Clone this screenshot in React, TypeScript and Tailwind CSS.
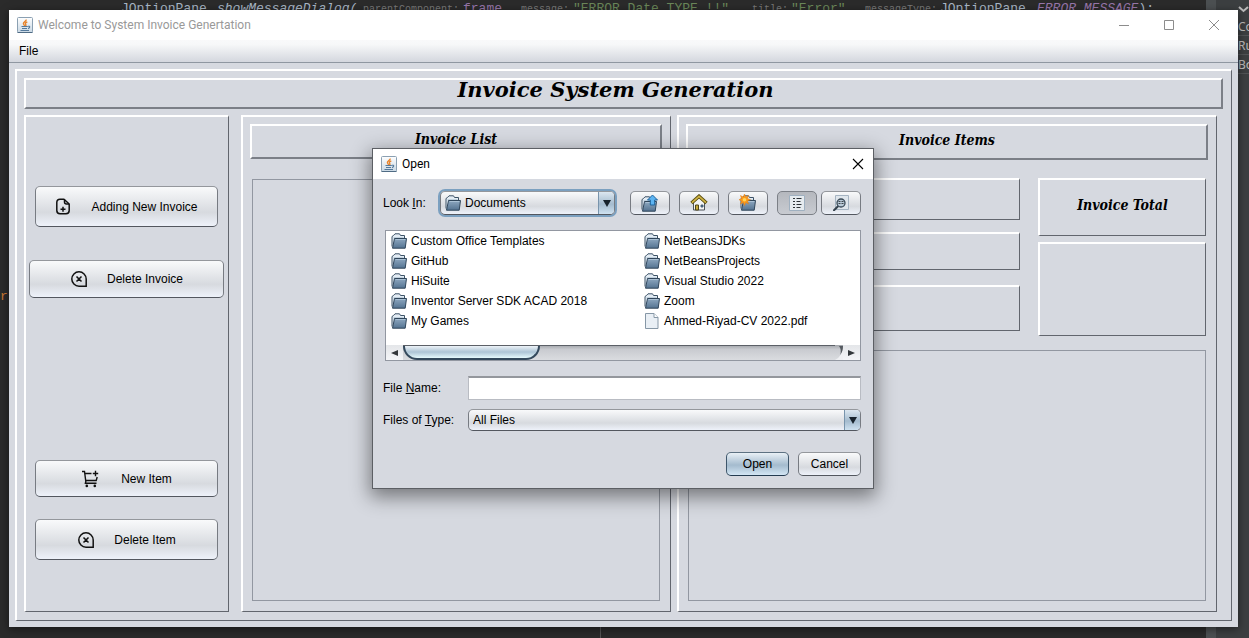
import { ReactNode } from "react";

const sans = "font-['Liberation_Sans',Arial,sans-serif]";
const bevel =
  "border-t-2 border-l-2 border-r border-b border-t-white border-l-white border-r-[#62666e] border-b-[#62666e]";
const raised =
  "border-2 border-t-white border-l-white border-r-[#7b7f87] border-b-[#7b7f87]";
const serifWide = "font-['DejaVu_Serif',serif] font-bold italic text-black";
const serif = "font-['DejaVu_Serif_Condensed','DejaVu_Serif',serif] font-bold italic text-black";
const caption = "font-['Roboto','Noto_Sans',sans-serif] text-xs";
const face =
  "border border-t-[#94979c] border-x-[#777b82] border-b-[#53575f] bg-linear-to-b from-[#f9fafb] via-[#d7dadf] via-65% to-[#eef2fa]";
const blueFace =
  "border border-t-[#5d7182] border-x-[#3e566b] border-b-[#243b50] bg-linear-to-b from-[#e9f0f6] via-[#a4bbce] via-55% to-[#d3e6f4]";

function JavaIcon() {
  return (
    <svg width="16" height="16" viewBox="0 0 16 16" className="shrink-0" aria-hidden="true">
      <defs>
        <linearGradient id="jbg" x1="0" y1="0" x2="0" y2="1">
          <stop offset="0" stopColor="#ffffff" />
          <stop offset="1" stopColor="#c9d8e4" />
        </linearGradient>
      </defs>
      <rect x=".5" y=".5" width="15" height="15" rx="1" fill="url(#jbg)" stroke="#8ba0b2" />
      <path d="M.5 15.5h15" stroke="#4f6b84" />
      <path d="M9 2.500c1 1.600-3 2.500-2.600 4.200.2.900 1.200 1.200 1 2.300M10.300 4.800c-1.800.8-2.300 1.500-1.600 2.500.5.800.3 1.300-.3 1.900" fill="none" stroke="#e8832a" strokeWidth="1.400" />
      <path d="M4.500 9.500h6.300M5 11.500h5M3.500 13.500h8.500M11 9.300c2.300-.5 2.300 1.700 0 2.300" fill="none" stroke="#54799b" strokeWidth="1.100" />
    </svg>
  );
}

function FolderShape() {
  return (
    <g>
      <path d="M1 13.500V3.500l1.500-1L4 .800h4.500l1 1.700h4v3" fill="#e4edf5" stroke="#3c5266" strokeLinejoin="round" />
      <path d="M2.500 5h10" stroke="#9fb4c6" />
      <path d="M3.500 5.500h12l-1.300 9.700H1.500z" fill="url(#fold)" stroke="#30465b" strokeLinejoin="round" />
      <path d="M4.500 6.500h9.800" stroke="#a9c0d4" />
    </g>
  );
}

function FolderDefs() {
  return (
    <svg width="0" height="0" className="absolute" aria-hidden="true">
      <defs>
        <linearGradient id="fold" x1="0" y1="0" x2="0" y2="1">
          <stop offset="0" stopColor="#8fa9c1" />
          <stop offset="1" stopColor="#547391" />
        </linearGradient>
      </defs>
    </svg>
  );
}

function FolderIcon() {
  return (
    <svg width="16" height="16" viewBox="0 0 16 16" className="shrink-0" aria-hidden="true">
      <FolderShape />
    </svg>
  );
}

function FileIcon() {
  return (
    <svg width="16" height="16" viewBox="0 0 16 16" className="shrink-0" aria-hidden="true">
      <path d="M1.500.500h8.500l4 4v11H1.500z" fill="#e9eff5" stroke="#8697a6" />
      <path d="M10 .500v4h4" fill="#fff" stroke="#8697a6" />
    </svg>
  );
}

function UpFolderIcon() {
  return (
    <svg width="18" height="18" viewBox="0 0 18 18" aria-hidden="true">
      <g transform="translate(0 2)">
        <FolderShape />
      </g>
      <path d="M11.500 1l5 5h-2.800v5H9.300V6H6.500z" fill="#5cb4f2" stroke="#1c639c" strokeLinejoin="round" />
    </svg>
  );
}

function HomeIcon() {
  return (
    <svg width="18" height="18" viewBox="0 0 18 18" aria-hidden="true">
      <path d="M3.500 8.500L9 3.500l5.500 5v7.500h-11z" fill="#f3f4f4" stroke="#4c5359" />
      <path d="M1.500 9L9 2.200 16.500 9" fill="none" stroke="#5b4d10" strokeWidth="3.400" />
      <path d="M2 8.600L9 2.300l7 6.300" fill="none" stroke="#d0b544" strokeWidth="1.600" />
      <path d="M5.500 11h3v5h-3z" fill="#c9ab3c" stroke="#4f4516" />
      <path d="M11 11h2v2h-2z" fill="#6b90b4" stroke="#34495d" strokeWidth=".8" />
    </svg>
  );
}

function NewFolderIcon() {
  return (
    <svg width="18" height="18" viewBox="0 0 18 18" aria-hidden="true">
      <g transform="translate(1 1)">
        <FolderShape />
      </g>
      <path d="M5.500 0l1.300 3L9.500 1.500 8.500 4.500l3 1.200-3 1.300 1 3-2.700-1.400-1.300 3-1.300-3L1.500 10l1-3-2.500-1.300 2.500-1.200-1-3L4.200 3z" fill="#fb9a1b" stroke="#e07b12" strokeWidth=".5" />
      <circle cx="5.500" cy="5.700" r="1.800" fill="#ffd55a" />
    </svg>
  );
}

function ListIcon() {
  return (
    <svg width="16" height="16" viewBox="0 0 16 16" aria-hidden="true">
      <path d="M.5.500h15v15H.5z" fill="#e6ebef" stroke="#9fb0c0" />
      <path d="M4 3.500h2M4 6.500h2M4 9.500h2M4 12.500h2M7.500 3.500h5M7.500 6.500h4M7.500 9.500h5M7.500 12.500h4" stroke="#2e3337" />
    </svg>
  );
}

function DetailsIcon() {
  return (
    <svg width="16" height="16" viewBox="0 0 16 16" aria-hidden="true">
      <path d="M2.500.500h13v14h-13z" fill="#dfe6ec" stroke="#a5b4c2" />
      <path d="M5.300 11L1 15.300" stroke="#35424d" strokeWidth="2" strokeLinecap="round" />
      <circle cx="8" cy="8" r="4" fill="#b9cad8" stroke="#3a4a57" strokeWidth="1.300" />
      <path d="M5.500 6.500h2M8.500 6.500h2M5.500 8.500h2M8.500 8.500h2" stroke="#3b4348" />
    </svg>
  );
}

function FileAddIcon() {
  return (
    <svg width="16" height="18" viewBox="0 0 16 18" fill="none" stroke="#111" strokeWidth="1.500" strokeLinejoin="round" aria-hidden="true">
      <path d="M9 1.300H5Q1.800 1.300 1.800 4.500v8q0 3.200 3.200 3.200h6q3.200 0 3.200-3.200V6z" />
      <path d="M9.500 1.500V4q0 2 2 2H14M8 8.800v5M5.500 11.300h5" />
    </svg>
  );
}

function DeleteIcon() {
  return (
    <svg width="18" height="18" viewBox="0 0 18 18" fill="none" stroke="#111" strokeWidth="1.500" aria-hidden="true">
      <path d="M9 1.800a7.200 7.200 0 0 1 7.200 7.200v7.200H9A7.200 7.200 0 0 1 9 1.800zM6.500 6.500l5 5M11.500 6.500l-5 5" />
    </svg>
  );
}

function CartAddIcon() {
  return (
    <svg width="18" height="18" viewBox="0 0 18 18" fill="none" stroke="#111" strokeWidth="1.400" aria-hidden="true">
      <path d="M1 1.500h2.500l1.200 9h10.500l1-3.500M4.200 3.500h6.300M14.500.800v5.400M11.800 3.500h5.400M5 10.500l-.6 2.800H15.500" />
      <circle cx="5.800" cy="15.900" r="1.300" fill="#111" stroke="none" />
      <circle cx="13.800" cy="15.900" r="1.300" fill="#111" stroke="none" />
    </svg>
  );
}

function ActionButton({ icon, label, size }: { icon: ReactNode; label: string; size: string }) {
  return (
    <button type="button" className={`flex items-center justify-center rounded-[5px] text-xs text-black ${face} ${size}`}>
      {icon}
      {label}
    </button>
  );
}

function ToolButton({ label, children }: { label: string; children: ReactNode }) {
  return (
    <button type="button" aria-label={label} className={`flex h-6 w-10 items-center justify-center rounded-[5px] ${face}`}>
      {children}
    </button>
  );
}

function Entry({ name, file }: { name: string; file?: boolean }) {
  return (
    <li className="flex h-5 items-center gap-1 whitespace-nowrap">
      {file ? <FileIcon /> : <FolderIcon />}
      {name}
    </li>
  );
}

function Editor() {
  const hint = "text-[10px] text-[#787878]";
  return (
    <div className="absolute inset-0 flex bg-[#2b2b2b] font-['Liberation_Mono','Courier_New',monospace] text-[13px] text-[#a9b7c6]">
      <div className="relative flex-1 overflow-hidden">
        <div className="flex h-[18px] items-center whitespace-pre pl-[121px]">
          <span className="w-24">JOptionPane.</span>
          <span className="w-[146px] italic">showMessageDialog(</span>
          <span className={`w-[100px] ${hint}`}>parentComponent:</span>
          <span className="w-[58px]"><span className="text-[#9876aa]">frame</span>,</span>
          <span className={`w-[52px] ${hint}`}>message:</span>
          <span className="w-[179px]"><span className="text-[#6a8759]">"ERROR Date TYPE !!"</span>,</span>
          <span className={`w-[39px] ${hint}`}>title:</span>
          <span className="w-[74px]"><span className="text-[#6a8759]">"Error"</span>,</span>
          <span className={`w-[75px] ${hint}`}>messageType:</span>
          <span className="w-[97px]">JOptionPane.</span>
          <span><span className="italic text-[#9876aa]">ERROR_MESSAGE</span>);</span>
        </div>
        <div className="absolute top-[287px] left-0 text-[#cc7832]">r</div>
        <div className="absolute bottom-0 left-[600px] h-3 w-px bg-[#555555]" />
      </div>
      <div className="w-[10px] bg-[#4c5052]" />
      <div className="flex w-[33px] flex-col overflow-hidden bg-[#3c3f41] pl-[22px] font-['Noto_Sans',sans-serif] text-xs text-[#bbbbbb]">
        <div className="flex h-[17px] items-center">
          <svg width="11" height="10" viewBox="0 0 11 10" fill="none" stroke="#bbbbbb" strokeWidth="2" aria-hidden="true">
            <path d="M1 3l4.500 4L10 3" />
          </svg>
        </div>
        <div className="h-[19px] border-b border-[#515456] leading-5">Co</div>
        <div className="h-[19px] border-b border-[#515456] leading-5">Ru</div>
        <div className="h-[19px] border-b border-[#515456] leading-5">Bo</div>
      </div>
    </div>
  );
}

function OpenDialog() {
  return (
    <section role="dialog" aria-label="Open" className="w-[502px] border border-[#5c5f64] bg-[#d6d9e0] text-xs text-black shadow-[0_6px_18px_2px_rgba(0,0,0,0.45)]">
      <header className="flex h-[30px] items-center bg-white px-2">
        <JavaIcon />
        <h2 className={`ml-[5px] flex-1 ${caption}`}>Open</h2>
        <button type="button" aria-label="Close" className="p-px">
          <svg width="12" height="12" viewBox="0 0 12 12" stroke="#000" strokeWidth="1.100" aria-hidden="true">
            <path d="M1 1l10 10M11 1L1 11" />
          </svg>
        </button>
      </header>
      <div className="pt-3 pr-3 pb-3 pl-[10px]">
        <div className="flex h-6 items-center">
          <label htmlFor="look" className="w-[57px]">Look <u>I</u>n:</label>
          <div className={`flex h-6 w-[175px] items-center overflow-hidden rounded-[5px] pl-1 ring-2 ring-[#7ba0c0] ${face}`}>
            <FolderIcon />
            <select id="look" className="min-w-0 flex-1 appearance-none bg-transparent pl-1 outline-none">
              <option>Documents</option>
            </select>
            <Arrow />
          </div>
          <div className="ml-auto flex">
            <div className="flex gap-[9px]">
              <ToolButton label="Up one level"><UpFolderIcon /></ToolButton>
              <ToolButton label="Home"><HomeIcon /></ToolButton>
              <ToolButton label="Create new folder"><NewFolderIcon /></ToolButton>
              <button type="button" aria-label="List" aria-pressed="true" className="flex h-6 w-10 items-center justify-center rounded-[5px] border border-[#7c8087] bg-linear-to-b from-[#b5b8be] to-[#c8cbd1]">
                <ListIcon />
              </button>
            </div>
            <div className="ml-1">
              <ToolButton label="Details"><DetailsIcon /></ToolButton>
            </div>
          </div>
        </div>
        <div className="mt-[15px] ml-[2px] border border-[#9297a1] bg-white">
          <div className="flex h-[114px] pl-[5px]">
            <ul className="w-[253px]">
              <Entry name="Custom Office Templates" />
              <Entry name="GitHub" />
              <Entry name="HiSuite" />
              <Entry name="Inventor Server SDK ACAD 2018" />
              <Entry name="My Games" />
            </ul>
            <ul>
              <Entry name="NetBeansJDKs" />
              <Entry name="NetBeansProjects" />
              <Entry name="Visual Studio 2022" />
              <Entry name="Zoom" />
              <Entry name="Ahmed-Riyad-CV 2022.pdf" file />
            </ul>
          </div>
          <div className="flex h-[15px] bg-linear-to-b from-[#a2a5aa] via-[#c9cbd0] via-30% to-[#dadce0]">
            <button type="button" aria-label="Scroll left" className="flex w-[17px] items-center justify-center bg-linear-to-b from-[#e4e6e9] to-[#f4f5f8]">
              <svg width="7" height="6" viewBox="0 0 7 6" aria-hidden="true"><path d="M7 0v6L0 3z" fill="#33373b" /></svg>
            </button>
            <div className="flex flex-1 border-t border-[#5c6067]">
              <div className="w-[137px] rounded-b-[14px] border-x-2 border-b-2 border-[#34495c] bg-linear-to-b from-[#edf3f8] via-[#adc4d5] via-50% to-[#e6fafd]" />
            </div>
            <svg width="8" height="15" viewBox="0 0 8 15" aria-hidden="true">
              <path d="M8 1v14H0Q7 12 8 1z" fill="#eff0f3" />
              <path d="M4 1h4Q8 7 5 10 7 5 4 1z" fill="#555a60" />
            </svg>
            <button type="button" aria-label="Scroll right" className="flex w-[17px] items-center justify-center bg-linear-to-b from-[#e4e6e9] to-[#f4f5f8]">
              <svg width="7" height="6" viewBox="0 0 7 6" aria-hidden="true"><path d="M0 0v6l7-3z" fill="#33373b" /></svg>
            </button>
          </div>
        </div>
        <div className="mt-[15px] flex h-6 items-center">
          <label htmlFor="fname" className="w-[85px]">File <u>N</u>ame:</label>
          <input id="fname" type="text" className="h-6 min-w-0 flex-1 border border-t-2 border-[#b9bcc3] border-t-[#94979d] bg-white px-1 outline-none" />
        </div>
        <div className="mt-[9px] flex h-[22px] items-center">
          <label htmlFor="ftype" className="w-[85px]">Files of <u>T</u>ype:</label>
          <div className={`flex h-[22px] min-w-0 flex-1 items-center overflow-hidden rounded-[5px] ${face}`}>
            <select id="ftype" className="min-w-0 flex-1 appearance-none bg-transparent pl-1 outline-none">
              <option>All Files</option>
            </select>
            <Arrow />
          </div>
        </div>
        <div className="mt-[21px] flex justify-end gap-[9px]">
          <button type="button" className={`h-6 w-[63px] rounded-[5px] ${blueFace}`}>Open</button>
          <button type="button" className={`h-6 w-[63px] rounded-[5px] ${face}`}>Cancel</button>
        </div>
      </div>
    </section>
  );
}

function Arrow() {
  return (
    <span className="flex w-4 shrink-0 items-center justify-center self-stretch border-l border-[#7894ac] bg-linear-to-b from-[#dce7f0] via-[#a4bbce] via-55% to-[#cfe2f1]">
      <svg width="8" height="7" viewBox="0 0 8 7" aria-hidden="true"><path d="M0 0h8L4 7z" fill="#17222c" /></svg>
    </span>
  );
}

export default function App() {
  return (
    <div className={`relative h-screen overflow-hidden ${sans}`}>
      <FolderDefs />
      <Editor />
      <main className="absolute top-[10px] right-[11px] bottom-[11px] left-[9px] flex flex-col bg-[#d6d9e0] shadow-[0_2px_8px_rgba(0,0,0,0.5)]">
        <header className="flex h-[30px] items-center bg-white pl-2">
          <JavaIcon />
          <h1 className={`ml-[5px] flex-1 text-[#999999] ${caption}`}>Welcome to System Invoice Genertation</h1>
          <div className="flex pr-[2px]">
            <WindowButton label="Minimize" d="M0 5.500h10" />
            <WindowButton label="Maximize" d="M.5.500h9v9h-9z" />
            <WindowButton label="Close" d="M0 0l10 10M10 0L0 10" />
          </div>
        </header>
        <nav className="flex h-[23px] items-center border-b border-[#8f97a1] bg-linear-to-b from-[#f9f9fa] via-[#f7f8f9] via-20% to-[#d4d7de] pl-[10px]">
          <button type="button" className="text-xs text-black">File</button>
        </nav>
        <div className="flex min-h-0 flex-1 p-[6px]">
          <div className={`flex min-w-0 flex-1 flex-col gap-[6px] pt-[7px] pr-2 pb-2 pl-[7px] ${bevel}`}>
            <h2 className={`h-[31px] pr-4 text-center text-[21px] leading-5 ${raised} ${serifWide}`}>Invoice System Generation</h2>
            <div className="flex min-h-0 flex-1 pr-[6px]">
              <aside className={`flex w-[205px] shrink-0 flex-col pt-[69px] pb-[51px] ${bevel}`}>
                <ActionButton icon={<FileAddIcon />} label="Adding New Invoice" size="mr-[10px] ml-[9px] h-[41px] gap-5" />
                <ActionButton icon={<DeleteIcon />} label="Delete Invoice" size="mt-[33px] mr-1 ml-[3px] h-[38px] gap-[19px]" />
                <ActionButton icon={<CartAddIcon />} label="New Item" size="mt-auto mr-[10px] ml-[9px] h-[37px] gap-[22px]" />
                <ActionButton icon={<DeleteIcon />} label="Delete Item" size="mt-[22px] mr-[10px] ml-[9px] h-[41px] gap-[19px]" />
              </aside>
              <section className={`ml-3 flex min-w-0 flex-[412] flex-col pt-[7px] pr-2 pb-[10px] pl-[7px] ${bevel}`}>
                <h3 className={`h-[35px] text-center text-sm leading-[26px] ${raised} ${serif}`}>Invoice List</h3>
                <div className="mx-[2px] mt-5 flex-1 border border-[#9297a1]" />
              </section>
              <section className={`ml-[6px] flex min-w-0 flex-[522] flex-col pt-[7px] pr-2 pb-[10px] pl-[7px] ${bevel}`}>
                <h3 className={`h-9 text-center text-sm leading-7 ${raised} ${serif}`}>Invoice Items</h3>
                <div className="mx-[2px] mt-[18px] flex gap-[18px]">
                  <div className="flex min-w-0 flex-1 flex-col">
                    <div className={`h-[42px] ${bevel}`} />
                    <div className={`mt-3 h-[38px] ${bevel}`} />
                    <div className={`mt-[15px] h-[46px] ${bevel}`} />
                  </div>
                  <div className="flex w-[168px] shrink-0 flex-col gap-[6px]">
                    <h3 className={`h-[58px] text-center text-sm leading-[50px] ${bevel} ${serif}`}>Invoice Total</h3>
                    <div className={`h-[94px] ${bevel}`} />
                  </div>
                </div>
                <div className="mx-[2px] mt-[14px] flex-1 border border-[#9297a1]" />
              </section>
            </div>
          </div>
        </div>
        <div className="absolute inset-0 flex items-center justify-center pr-px">
          <OpenDialog />
        </div>
      </main>
    </div>
  );
}

function WindowButton({ label, d }: { label: string; d: string }) {
  return (
    <button type="button" aria-label={label} className="flex h-7 w-[45px] items-center justify-center">
      <svg width="10" height="10" viewBox="0 0 10 10" fill="none" stroke="#8c8c8c" aria-hidden="true">
        <path d={d} />
      </svg>
    </button>
  );
}
